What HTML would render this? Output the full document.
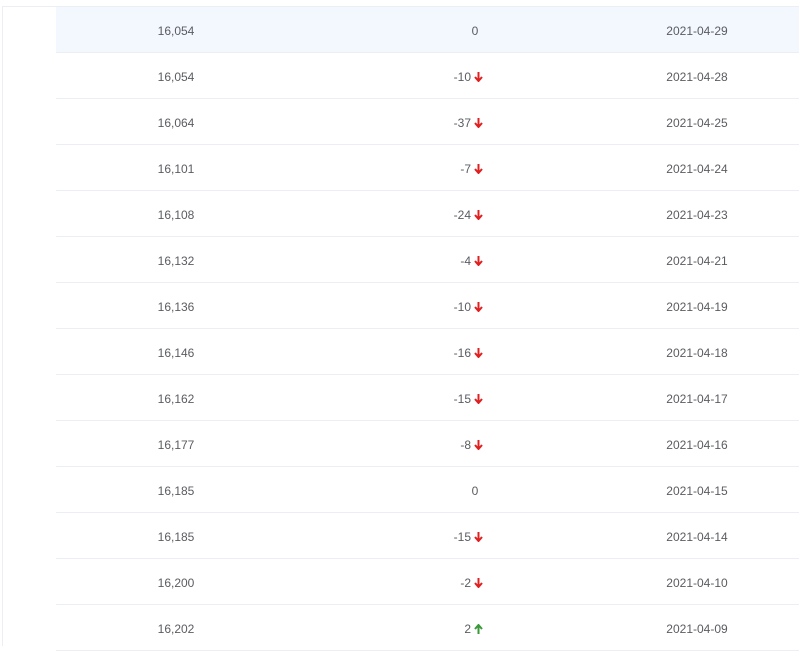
<!DOCTYPE html>
<html><head><meta charset="utf-8"><style>
body{margin:0;width:799px;height:646px;background:#fff;overflow:hidden;font-family:"Liberation Sans",sans-serif;font-size:12px;color:#5a5c61;position:relative}
.vl{position:absolute;left:2px;top:6px;width:1px;height:640px;background:#ebeef5}
.hl{position:absolute;left:2px;top:6px;width:797px;height:1px;background:#ebeef5}
.row{position:absolute;left:56px;width:743px;height:45px;border-bottom:1px solid #ebeef5}
.row.hi{background:#f3f7fe}
.c{position:absolute;top:1px;line-height:46px;white-space:nowrap}
.c1{left:60px;width:120px;text-align:center}
.c3{left:571px;width:140px;text-align:center}
.c2{right:316px;text-align:right}
.c0{left:359px;width:120px;text-align:center}
.ar{display:inline-block;width:9px;height:10px;vertical-align:-1px;margin-left:3px}
</style></head><body>
<div class="vl"></div><div class="hl"></div>
<div id="t"></div>
<script>
var d=[["16,054","0","2021-04-29"],["16,054","-10","2021-04-28"],["16,064","-37","2021-04-25"],["16,101","-7","2021-04-24"],["16,108","-24","2021-04-23"],["16,132","-4","2021-04-21"],["16,136","-10","2021-04-19"],["16,146","-16","2021-04-18"],["16,162","-15","2021-04-17"],["16,177","-8","2021-04-16"],["16,185","0","2021-04-15"],["16,185","-15","2021-04-14"],["16,200","-2","2021-04-10"],["16,202","2","2021-04-09"]];
var dn='<svg class="ar" viewBox="0 0 9 10"><path d="M4.5 0V8M1 5L4.5 9L8 5" stroke="#e02020" stroke-width="2" fill="none"/></svg>';
var up='<svg class="ar" viewBox="0 0 9 10"><path d="M4.5 10V2M1 5L4.5 1L8 5" stroke="#3a9a3a" stroke-width="2" fill="none"/></svg>';
var h='';
d.forEach(function(r,i){
 var mid;
 if(r[1]=="0") mid='<div class="c c0">0</div>';
 else mid='<div class="c c2">'+r[1]+(r[1][0]=='-'?dn:up)+'</div>';
 h+='<div class="row'+(i==0?' hi':'')+'" style="top:'+(7+i*46)+'px"><div class="c c1">'+r[0]+'</div>'+mid+'<div class="c c3">'+r[2]+'</div></div>';
});
document.getElementById('t').innerHTML=h;
</script>
</body></html>
